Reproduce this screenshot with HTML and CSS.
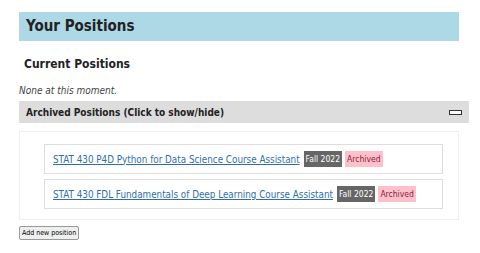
FILE: index.html
```html
<!DOCTYPE html>
<html lang="en">
<head>
    <meta charset="UTF-8">
    <meta name="viewport" content="width=device-width, initial-scale=1.0">
    <title>Your Positions</title>
    <link rel="stylesheet" href="styles.css">
</head>
<body>
    <div class="page">
        <h1 class="page-title">Your Positions</h1>

        <h2 class="section-title">Current Positions</h2>
        <p class="empty-note">None at this moment.</p>

        <div class="toggle-bar" onclick="toggleArchived()">
            <span>Archived Positions (Click to show/hide)</span>
            <span class="toggle-icon"></span>
        </div>

        <div class="archived-panel" id="archivedPanel">
            <div class="position-item">
                <a href="#">STAT 430 P4D Python for Data Science Course Assistant</a>
                <span class="badge term">Fall 2022</span>
                <span class="badge status">Archived</span>
            </div>
            <div class="position-item">
                <a href="#">STAT 430 FDL Fundamentals of Deep Learning Course Assistant</a>
                <span class="badge term">Fall 2022</span>
                <span class="badge status">Archived</span>
            </div>
        </div>

        <button type="button" class="add-button">Add new position</button>
    </div>

    <script>
        // Show or hide the archived list
        function toggleArchived() {
            var panel = document.getElementById("archivedPanel");
            if (panel.style.display === "none") {
                panel.style.display = "block";
            } else {
                panel.style.display = "none";
            }
        }
    </script>
</body>
</html>
```

FILE: styles.css
```css
body {
    font-family: "DejaVu Sans Condensed", "DejaVu Sans", sans-serif;
    background-color: #fff;
    color: #222;
    margin: 0;
    padding: 0;
}

.page {
    padding: 12px 11px 0 19px;
}

.page-title {
    width: 440px;
    box-sizing: border-box;
    margin: 0;
    padding: 5px 7px;
    height: 29px;
    background-color: #add8e6;
    font-size: 15px;
    font-weight: bold;
    line-height: 19px;
}

.section-title {
    margin: 15px 0 0 5px;
    font-size: 12px;
    font-weight: bold;
    line-height: 16px;
}

.empty-note {
    margin: 13px 0 0 0;
    font-size: 10px;
    font-style: italic;
    color: #444;
    line-height: 12px;
}

.toggle-bar {
    margin-top: 4px;
    height: 22px;
    box-sizing: border-box;
    padding: 0 7px;
    display: flex;
    align-items: center;
    justify-content: space-between;
    background-color: #dddddd;
    font-size: 10px;
    font-weight: bold;
    cursor: pointer;
}

.toggle-icon {
    width: 11px;
    height: 3px;
    border: 1px solid #333;
    background-color: #fff;
}

.archived-panel {
    width: 440px;
    box-sizing: border-box;
    margin-top: 8px;
    padding: 12px 15px 10px 24px;
    border: 1px solid #eee;
}

.position-item {
    display: flex;
    align-items: center;
    gap: 3px;
    height: 30px;
    box-sizing: border-box;
    padding: 0 8px;
    border: 1px solid #ddd;
    margin-bottom: 5px;
    font-size: 9.8px;
}

.position-item:last-child {
    margin-bottom: 0;
}

.position-item a {
    color: #2f6fa8;
    margin-right: 1px;
}

.badge {
    padding: 3px 2px;
    font-size: 8.5px;
}

.term {
    background-color: #666;
    color: #fff;
}

.status {
    background-color: #ffc0cb;
    color: #8b1a3a;
}

.add-button {
    margin-top: 6px;
    font-family: "DejaVu Sans Condensed", "DejaVu Sans", sans-serif;
    font-size: 7px;
    padding: 2px 2px;
    background-color: #efefef;
    border: 1px solid #999;
    border-radius: 2px;
    color: #000;
}
```
